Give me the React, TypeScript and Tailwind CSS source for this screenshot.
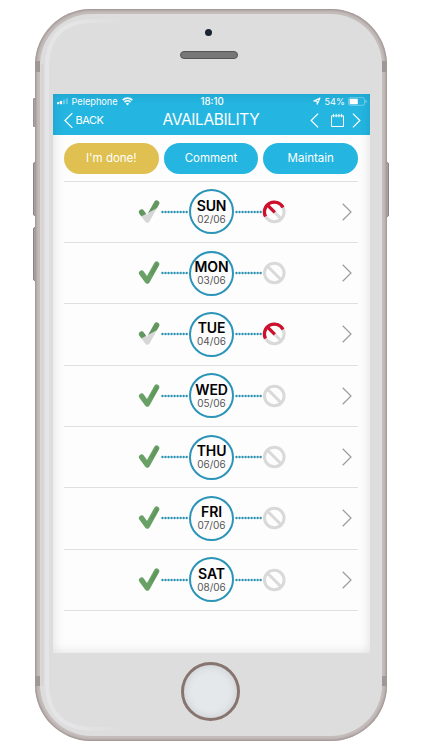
type Day = { name: string; date: string; partial?: boolean };

const days: Day[] = [
  { name: "SUN", date: "02/06", partial: true },
  { name: "MON", date: "03/06" },
  { name: "TUE", date: "04/06", partial: true },
  { name: "WED", date: "05/06" },
  { name: "THU", date: "06/06" },
  { name: "FRI", date: "07/06" },
  { name: "SAT", date: "08/06" },
];

const Check = ({ partial }: { partial?: boolean }) => (
  <svg className="h-6 w-[22px] shrink-0" viewBox="0 0 22 24" fill="none" strokeLinecap="round" strokeLinejoin="round">
    <path d="M3.6 12.2 L9.3 20 L18.6 3.2" stroke={partial ? "#d6d7d6" : "#68a065"} strokeWidth="5.4" />
    {partial ? (
      <>
        <clipPath id="upper">
          <path d="M0 0H22V6.5L8.5 13.8L0 18Z" />
        </clipPath>
        <path d="M3.6 12.2 L9.3 20 L18.6 3.2" stroke="#62985f" strokeWidth="5.4" clipPath="url(#upper)" />
      </>
    ) : (
      <path d="M18.9 4 L14.2 12.2" stroke="#4f8750" strokeOpacity="0.35" strokeWidth="3" />
    )}
  </svg>
);

const Ban = ({ partial }: { partial?: boolean }) => (
  <svg className="h-6 w-6 shrink-0" viewBox="0 0 24 24" fill="none" strokeWidth="3">
    <circle cx="12.3" cy="12" r="9.8" stroke="#d9d9d9" />
    <path d="M5.5 5.2 L19.1 18.8" stroke="#d9d9d9" />
    {partial && (
      <g stroke="#ce0f2c" strokeWidth="3.3">
        <path d="M3.5 16.4 A9.8 9.8 0 0 1 21 7.4" />
        <path d="M5.5 5.2 L12.8 12.4" />
      </g>
    )}
  </svg>
);

const Dots = () => (
  <svg className="h-3 w-[27px] shrink-0" viewBox="0 0 27 12">
    <path d="M1.5 6H26" stroke="#2b92b4" strokeWidth="2.4" strokeLinecap="round" strokeDasharray="0 3.02" />
  </svg>
);

const Chevron = ({ className, left }: { className: string; left?: boolean }) => (
  <svg className={className} viewBox="0 0 10 18" fill="none" stroke="currentColor" strokeWidth="1.2">
    <path d={left ? "M9.3 0.8 L1 9 L9.3 17.2" : "M0.7 0.8 L9 9 L0.7 17.2"} vectorEffect="non-scaling-stroke" />
  </svg>
);

const StatusBar = () => (
  <div className="flex h-[14px] items-center pl-[4px] pr-[3px] text-[10px] leading-[13px]">
    <div className="flex w-[144px] items-center">
      <svg className="h-[7px] w-[12px] shrink-0" viewBox="0 0 13 7" fill="white">
        <rect y="4" width="2.4" height="2.5" rx=".5" />
        <rect x="3.1" y="3" width="2.4" height="3.5" rx=".5" />
        <rect x="6.4" y="1.5" width="2.2" height="5" rx=".5" opacity=".35" />
        <rect x="9.6" width="2.2" height="6.5" rx=".5" opacity=".3" />
      </svg>
      <span className="ml-[3px] w-[46px] whitespace-nowrap text-[9.2px]">Pelephone</span>
      <svg className="ml-[4px] h-[9px] w-[11px]" viewBox="0 0 11 9" fill="none" stroke="white" strokeWidth="1.7">
        <path d="M.7 3.2C3.4.5 7.6.5 10.3 3.2M2.5 5.1C4.2 3.5 6.8 3.5 8.5 5.1" />
        <path d="M5.5 8.4L3.7 6.5C4.8 5.8 6.2 5.8 7.3 6.5Z" fill="white" stroke="none" />
      </svg>
    </div>
    <span className="w-[28px] whitespace-nowrap text-[9.7px] font-medium">18:10</span>
    <div className="flex flex-1 items-center justify-end">
      <svg className="mr-[4px] h-2 w-2" viewBox="0 0 8 8" fill="none" stroke="white" strokeWidth="1.1" strokeLinejoin="round">
        <path d="M.8 4L7 1L4.2 7.2L4 4.1Z" />
      </svg>
      <span className="w-[20px] whitespace-nowrap text-[9.1px]">54%</span>
      <svg className="ml-[3px] h-[9px] w-[19px]" viewBox="0 0 19 9" fill="none">
        <rect x=".5" y=".7" width="16" height="7.6" rx="1.6" stroke="white" strokeOpacity=".5" strokeWidth=".7" />
        <rect x="1.6" y="1.8" width="8.2" height="5.4" rx=".6" fill="white" />
        <path d="M18 3.3V5.7" stroke="white" strokeOpacity=".6" />
      </svg>
    </div>
  </div>
);

const Header = () => (
  <header className="h-[41px] shrink-0 bg-[#24b5e1] text-white">
    <StatusBar />
    <div className="flex h-[24px] items-center pl-[11px] pr-[9px]">
      <Chevron left className="h-[17px] w-[9px]" />
      <span className="ml-[3px] w-[87px] text-[11px] tracking-[-0.45px]">BACK</span>
      <h1 className="w-[147px] whitespace-nowrap text-[15.5px] tracking-[-0.4px]">AVAILABILITY</h1>
      <Chevron left className="h-[15px] w-[9px]" />
      <svg className="ml-[11px] h-[15px] w-[15px]" viewBox="0 0 15 15" fill="none" stroke="white">
        <path d="M3 2.8H1.5V13.5H13.5V2.8H12" />
        <path d="M3.5 .8V4.3M6.2 .8V4.3M8.9 .8V4.3M11.6 .8V4.3M3 2.8H12" strokeWidth=".9" />
      </svg>
      <Chevron className="ml-auto h-[15px] w-[9px]" />
    </div>
  </header>
);

const DayRow = ({ day }: { day: Day }) => (
  <li className="flex h-[61.35px] items-center border-b border-[#dfdfe0] pl-[74px] pr-[6px]">
    <Check partial={day.partial} />
    <div className="ml-[1px]"><Dots /></div>
    <div className="ml-[1px] flex h-[45px] w-[45px] shrink-0 flex-col items-center justify-center rounded-full border-2 border-[#2b94b8]">
      <span className="text-[14px] font-semibold leading-[15px] tracking-[-0.1px] text-black">{day.name}</span>
      <span className="text-[10px] leading-[13px] text-[#555]">{day.date}</span>
    </div>
    <div className="ml-[1px]"><Dots /></div>
    <Ban partial={day.partial} />
    <Chevron className="ml-auto h-[18px] w-[10px] text-[#9b9b9b]" />
  </li>
);

const App = () => {
  return (
    <div className="h-[750px] w-[422px] overflow-hidden bg-white pl-[35px] pt-[9px] font-['Inter','Liberation_Sans',sans-serif]">
      <div className="relative h-[732px] w-[352px]">
        {/* side buttons */}
        <div className="absolute left-[-2px] top-[89px] h-[29px] w-[3px] rounded-l-[1px] border border-[#999090] bg-[#aaa2a1]" />
        <div className="absolute left-[-2px] top-[153px] h-[54px] w-[4px] rounded-l-[2px] border border-[#8b8383] bg-[#aaa2a1]" />
        <div className="absolute left-[-2px] top-[218px] h-[54px] w-[4px] rounded-l-[2px] border border-[#8b8383] bg-[#aaa2a1]" />
        <div className="absolute right-[-2px] top-[153px] h-[55px] w-[4px] rounded-r-[2px] border border-[#8b8383] bg-[#aaa2a1]" />

        <div className="relative h-full rounded-[56px] bg-[#c5bdbc] p-[5px] shadow-[inset_0_0_3px_1px_#938987]">
          {/* antenna bands */}
          <div className="absolute left-0 top-[52px] h-[11px] w-[5px] bg-[#a09897]" />
          <div className="absolute right-0 top-[52px] h-[11px] w-[5px] bg-[#a09897]" />
          <div className="absolute bottom-[55px] left-0 h-[10px] w-[5px] bg-[#a09897]" />
          <div className="absolute bottom-[55px] right-0 h-[10px] w-[5px] bg-[#a09897]" />

          <div className="relative flex h-full flex-col overflow-hidden rounded-[51px] bg-[#dddddd]">
            {/* soft highlight along the left edge */}
            <svg className="absolute left-0 top-0 h-full w-[110px]" viewBox="0 0 110 722" fill="none">
              <defs>
                <linearGradient id="shine" x1="0" x2="110" y1="0" y2="0" gradientUnits="userSpaceOnUse">
                  <stop stopColor="#e5e5e8" />
                  <stop offset=".3" stopColor="#e5e5e7" />
                  <stop offset=".75" stopColor="#dddddd" />
                </linearGradient>
              </defs>
              <path d="M110 7H54Q7 7 7 54V668Q7 715 54 715H110" stroke="url(#shine)" strokeWidth="4" />
              <path d="M2 50V672" stroke="#d8d4d4" strokeWidth="3" />
            </svg>

            <div className="flex h-[80px] shrink-0 flex-col items-center pr-[5px] pt-[15px]">
              <div className="h-[7px] w-[7px] rounded-full bg-[#1b2431]" />
              <div className="ml-[1px] mt-[15px] h-[8px] w-[58px] rounded-full border border-[#555] bg-[#777]" />
            </div>

            <div className="relative ml-[12.5px] flex h-[559px] w-[317px] shrink-0 flex-col bg-[#fdfdfd]">
              <Header />
              <main className="px-[11.5px] pt-[8px]">
                <div className="flex h-[38.6px] gap-[5px] border-b border-[#dfdfe0] text-[11.5px] text-white">
                  <button className="h-[31px] flex-1 rounded-full bg-[#dfc050]">I'm done!</button>
                  <button className="h-[31px] flex-1 rounded-full bg-[#24b5e1]">Comment</button>
                  <button className="h-[31px] flex-1 rounded-full bg-[#24b5e1]">Maintain</button>
                </div>
                <ul>
                  {days.map((day) => (
                    <DayRow key={day.name} day={day} />
                  ))}
                </ul>
              </main>
              <div className="pointer-events-none absolute inset-0 shadow-[inset_0_0_12px_rgba(0,0,0,0.13)]" />
            </div>

            <div className="flex flex-1 justify-center pr-px pt-[9px]">
              <div className="h-[59px] w-[59px] rounded-full border-[3px] border-[#87746e] bg-[#e5e8ea] shadow-[inset_0_0_8px_#c5cbd0]" />
            </div>
          </div>
        </div>
      </div>
    </div>
  );
};

export default App;
